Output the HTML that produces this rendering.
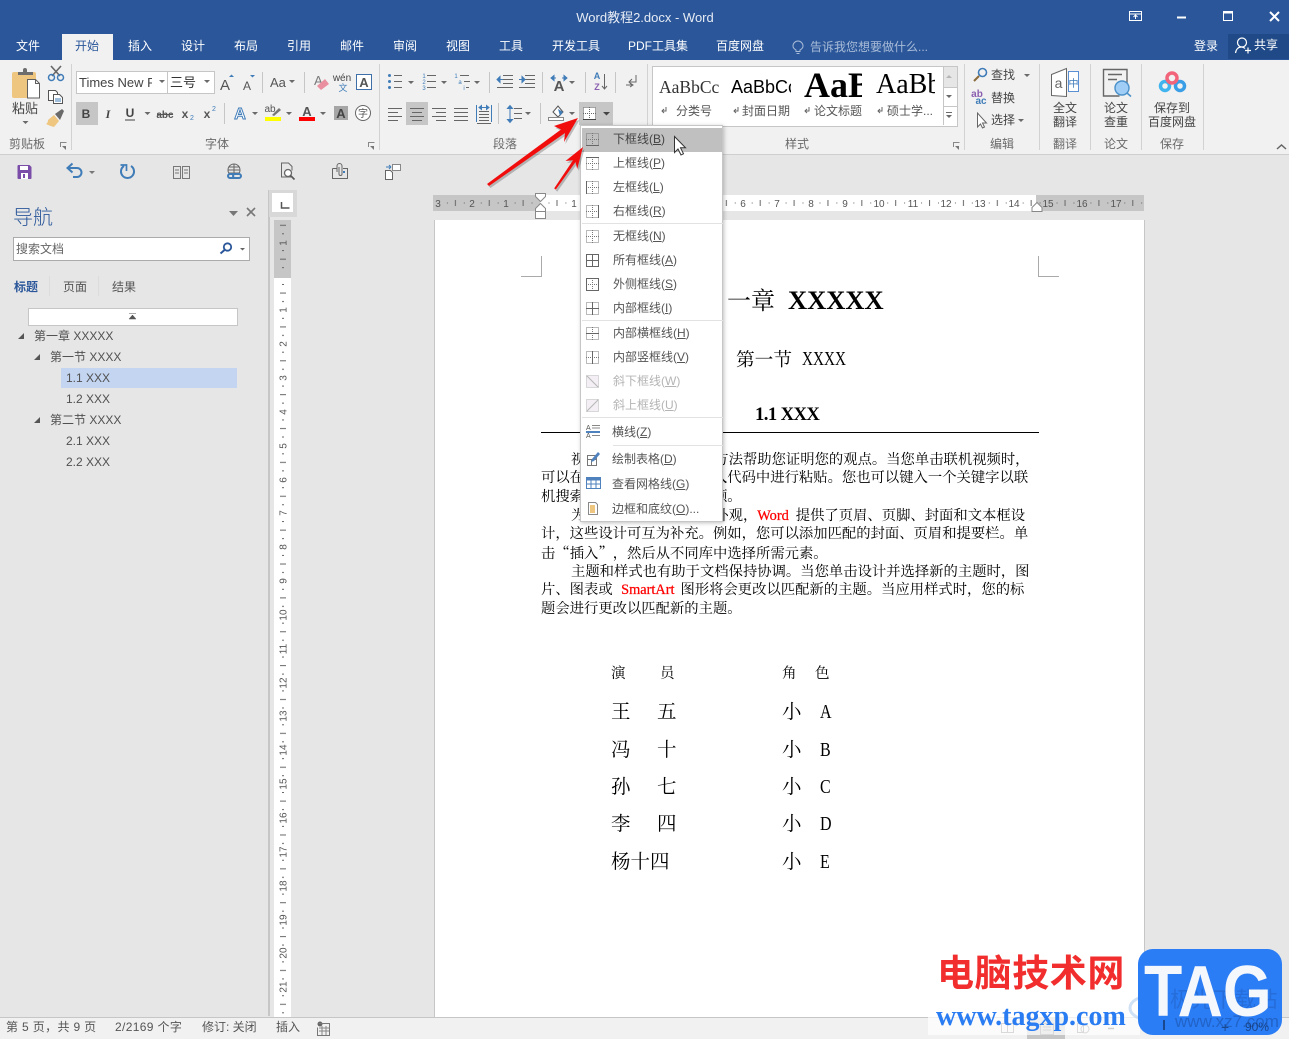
<!DOCTYPE html>
<html lang="zh-CN">
<head>
<meta charset="utf-8">
<title>Word教程2.docx - Word</title>
<style>
html,body{margin:0;padding:0}
body{position:relative;width:1289px;height:1039px;overflow:hidden;background:#e6e6e6;font-family:"Liberation Sans","Noto Sans CJK SC",sans-serif;font-size:12px;color:#444}
.b{position:absolute}
.t{position:absolute;white-space:nowrap;line-height:16px}
.c{transform:translateX(-50%)}
.w{color:#fff}
.g{color:#6a6a6a}
.d{position:absolute;white-space:nowrap;line-height:18px;font-size:14.33px;color:#000;font-family:"Liberation Serif","Noto Serif CJK SC",serif;text-spacing-trim:space-all}
.q{font-family:"Noto Serif CJK SC",serif}
.r{color:#f00;font-family:"Liberation Serif",serif;-webkit-text-stroke:.25px #f00}
.s{display:inline-block;transform:scaleX(.8);transform-origin:0 0}
.m{position:absolute;white-space:nowrap;line-height:16px;left:32px;color:#555}
.x{color:#b4b4b4}
.n{color:#505050;font-size:12px}
.st{letter-spacing:.35px;color:#555}
svg{position:absolute;left:0;top:0;overflow:visible}
svg text{font-family:"Liberation Sans","Noto Sans CJK SC",sans-serif}
.cl{position:absolute;overflow:hidden;white-space:nowrap}
</style>
</head>
<body>
<!-- backgrounds -->
<div class="b" style="left:0;top:0;width:1289px;height:60px;background:#2b579a"></div>
<div class="b" style="left:62px;top:34px;width:51px;height:26px;background:#f1f1f1"></div>
<div class="b" style="left:1228px;top:34px;width:61px;height:25px;background:#1f4a87"></div>
<div class="b" style="left:0;top:60px;width:1289px;height:94px;background:#f1f1f1;border-bottom:1px solid #cfcfcf"></div>
<div class="b" style="left:76px;top:71px;width:90px;height:21px;background:#fff;border:1px solid #c6c6c6"></div>
<div class="b" style="left:167px;top:71px;width:46px;height:21px;background:#fff;border:1px solid #c6c6c6"></div>
<div class="b" style="left:76px;top:102px;width:22px;height:23px;background:#c6c6c6"></div>
<div class="b" style="left:406px;top:102px;width:22px;height:23px;background:#c6c6c6"></div>
<div class="b" style="left:579px;top:102px;width:34px;height:23px;background:#c6c6c6"></div>
<div class="b" style="left:652px;top:66px;width:304px;height:59px;background:#fff;border:1px solid #c6c6c6"></div>
<div class="b" style="left:943px;top:67px;width:13px;height:20px;background:#e6e6e6;border-left:1px solid #c6c6c6;border-bottom:1px solid #c6c6c6"></div>
<div class="b" style="left:943px;top:87px;width:13px;height:19px;border-left:1px solid #c6c6c6;border-bottom:1px solid #c6c6c6"></div>
<div class="b" style="left:943px;top:106px;width:13px;height:19px;border-left:1px solid #c6c6c6"></div>
<!-- nav panel -->
<div class="b" style="left:268px;top:190px;width:2px;height:826px;background:#c6c6c6"></div>
<div class="b" style="left:13px;top:237px;width:235px;height:22px;background:#fff;border:1px solid #ababab"></div>
<div class="b" style="left:28px;top:308px;width:208px;height:16px;background:#fff;border:1px solid #c6c6c6"></div>
<div class="b" style="left:61px;top:368px;width:176px;height:20px;background:#c3d5f1"></div>
<div class="b" style="left:49px;top:276px;width:1px;height:20px;background:#dcdcdc"></div>
<div class="b" style="left:98px;top:276px;width:1px;height:20px;background:#dcdcdc"></div>
<!-- rulers bg -->
<div class="b" style="left:269px;top:190px;width:28px;height:27px;background:#d8d8d8"></div>
<div class="b" style="left:272px;top:193px;width:21px;height:19px;background:#fff"></div>
<div class="b" style="left:274px;top:220px;width:17px;height:797px;background:#fff"></div>
<div class="b" style="left:274px;top:220px;width:17px;height:58px;background:#c6c6c6"></div>
<div class="b" style="left:433px;top:195px;width:711px;height:16px;background:#fff"></div>
<div class="b" style="left:433px;top:195px;width:107px;height:16px;background:#c6c6c6"></div>
<div class="b" style="left:1036px;top:195px;width:108px;height:16px;background:#c6c6c6"></div>
<!-- document -->
<div class="b" style="left:434px;top:220px;width:709px;height:797px;background:#fff;border-left:1px solid #c6c6c6;border-right:1px solid #c6c6c6"></div>
<div class="b" style="left:541px;top:256px;width:1px;height:21px;background:#aaa"></div>
<div class="b" style="left:521px;top:276px;width:21px;height:1px;background:#aaa"></div>
<div class="b" style="left:1038px;top:256px;width:1px;height:21px;background:#aaa"></div>
<div class="b" style="left:1038px;top:276px;width:21px;height:1px;background:#aaa"></div>
<div class="b" style="left:541px;top:432px;width:498px;height:1px;background:#000"></div>
<!-- status bg -->
<div class="b" style="left:0;top:1017px;width:1289px;height:22px;background:#f1f1f1;border-top:1px solid #c6c6c6;box-sizing:border-box"></div>
<div class="b" style="left:1027px;top:1018px;width:38px;height:21px;background:#c6c6c6"></div>

<!-- icons layer -->
<svg width="1289" height="1039" viewBox="0 0 1289 1039">
<defs>
<pattern id="hr" x="540" y="195" width="33.87" height="16" patternUnits="userSpaceOnUse">
<path d="M8.5 7.5h1v1h-1zM25.4 7.5h1v1h-1zM16.5 5h1v6h-1z" fill="#666"/>
</pattern>
<pattern id="vr" x="274" y="276" width="17" height="33.87" patternUnits="userSpaceOnUse">
<path d="M8 8h2v1H8zM8 25h2v1H8zM6 16.5h6v1H6z" fill="#666"/>
</pattern>
</defs>
<!-- title buttons -->
<g fill="none" stroke="#fff">
<rect x="1129.5" y="11.5" width="12" height="9" stroke-width="1"/><path d="M1129 14h13M1135.5 19v-4M1133.5 17l2-2 2 2"/>
<path d="M1177 17.5h9" stroke-width="2"/>
<rect x="1223.5" y="11.5" width="9" height="9" stroke-width="1"/><path d="M1223 12.5h10" stroke-width="2"/>
<path d="M1270 12l9 9M1279 12l-9 9" stroke-width="2"/>
</g>
<!-- lightbulb -->
<path d="M796 51.5v-1.5c-1.8-1-3-2.500-3-4a5 5 0 0 1 10 0c0 1.500-1.200 3-3 4v1.500zM796.500 53.500h3" fill="none" stroke="#a9bcd8"/>
<!-- share icon -->
<g fill="none" stroke="#fff" stroke-width="1.200"><circle cx="1242" cy="42.500" r="4.500"/><path d="M1235.500 53c.5-4 3-6 6-6 1.500 0 2.500.5 3.500 1.500M1245 50.500h6M1248 47.500v6"/></g>
<!-- group separators -->
<path d="M71.500 64v86M379.500 64v86M647.500 64v86M964.500 64v86M1039.500 64v86M1090.500 64v86M1141.500 64v86M1203.500 64v86" stroke="#d2d2d2"/>
<path d="M262.500 72v21M304.500 72v21M224.500 103v21M489.500 72v21M542.500 72v21M585.500 72v21M615.500 72v21M498.500 103v21M540.500 103v21" stroke="#c6c6c6"/>
<!-- paste -->
<path d="M12 74q0-2 2-2h20q2 0 2 2v22q0 2-2 2H14q-2 0-2-2z" fill="#efc67f"/>
<path d="M18 72h5v-2q0-2 2-2t2 2v2h6v3H18z" fill="#6d6d6d"/>
<path d="M27.500 79.500h8l4 4v14.500h-12z" fill="#fff" stroke="#5f5f5f"/><path d="M35.500 79.500v4h4" fill="none" stroke="#5f5f5f"/>
<!-- scissors -->
<g fill="none"><path d="M51 66l9 10M61 66l-9 10" stroke="#666" stroke-width="1.600"/><circle cx="51.500" cy="77.500" r="3" stroke="#3f7cb8" stroke-width="1.500"/><circle cx="60.500" cy="77.500" r="3" stroke="#3f7cb8" stroke-width="1.500"/></g>
<!-- copy -->
<g fill="#fff" stroke="#555"><path d="M48.500 90.500h7l2 2v8h-9z"/><path d="M53.500 94.500h6l3 3v6h-9z"/></g><path d="M55 99h6M55 101h6" stroke="#3f7cb8"/>
<!-- brush -->
<path d="M48 120l6-5 5 6-5 6q-4-1-8-3 2-1 2-4z" fill="#efc67f"/><path d="M55 114l7-5 2 2-4 9z" fill="#6a6a6a"/>
<!-- arrows -->
<g fill="#6a6a6a">
<path d="M22.500 121h6l-3 3zM159 80h6l-3 3zM204 80h6l-3 3zM289 80h6l-3 3zM144.500 112h6l-3 3zM252 112h6l-3 3zM286 112h6l-3 3zM320 112h6l-3 3zM408 81h6l-3 3zM441 81h6l-3 3zM474 81h6l-3 3zM569 81h6l-3 3zM525 112h6l-3 3zM569 112h6l-3 3z"/>
<path d="M603 112h7l-3.500 3.500z" fill="#444"/>
<path d="M1024 74h6l-3 3zM1018 119h6l-3 3zM946 95h6l-3 3zM946 115h6l-3 3z"/><path d="M946 112h6v1h-6z"/>
<path d="M946 78h6l-3-3z" fill="#b5b5b5"/>
</g>
<path d="M1277 149l4.500-4 4.500 4" fill="none" stroke="#666" stroke-width="1.500"/>
<!-- launchers -->
<g fill="none" stroke="#888"><path d="M60.500 147v-4.500h6"/><path d="M368.500 147v-4.500h6"/><path d="M953.500 147v-4.500h6"/></g>
<path d="M62 146l4 4v-4zM370 146l4 4v-4zM955 146l4 4v-4z" fill="#777"/>
<!-- font row 1 icons -->
<text x="220" y="90" font-size="15" fill="#555">A</text><path d="M229 77l2.500-2.500 2.500 2.500z" fill="#3f7cb8"/>
<text x="243" y="90" font-size="12" fill="#555">A</text><path d="M250 75h5l-2.500 2.500z" fill="#3f7cb8"/>
<text x="270" y="87" font-size="13" fill="#555">Aa</text>
<text x="314" y="85" font-size="13" fill="#7a7a7a">A</text><polygon points="317,86 325,79 329,84 321,90" fill="#ea8f9f"/>
<text x="342" y="81" font-size="10" fill="#444" text-anchor="middle">wén</text><text x="343" y="91" font-size="9" fill="#3f7cb8" text-anchor="middle">文</text>
<rect x="356.500" y="74.500" width="15" height="15" fill="#fff" stroke="#3f6fa8"/><text x="364" y="87" font-size="13" font-weight="bold" fill="#555" text-anchor="middle">A</text>
<!-- font row 2 -->
<text x="86" y="118" font-size="12" font-weight="bold" fill="#444" text-anchor="middle">B</text>
<text x="108" y="118" font-size="12" font-style="italic" fill="#444" font-weight="bold" text-anchor="middle" style="font-family:'Liberation Serif',serif">I</text>
<text x="130" y="117" font-size="12" font-weight="bold" fill="#444" text-anchor="middle">U</text><path d="M125 120h10" stroke="#444"/>
<text x="165" y="118" font-size="10" font-weight="bold" fill="#555" text-anchor="middle">abc</text><path d="M157 114.500h16" stroke="#555"/>
<text x="185" y="118" font-size="12" font-weight="bold" fill="#555" text-anchor="middle">x</text><text x="192" y="120" font-size="7" fill="#3f7cb8" text-anchor="middle">2</text>
<text x="207" y="118" font-size="12" font-weight="bold" fill="#555" text-anchor="middle">x</text><text x="214" y="111" font-size="7" fill="#3f7cb8" text-anchor="middle">2</text>
<text x="240" y="119" font-size="16" font-weight="bold" fill="#fff" stroke="#3f7cb8" stroke-width="1" text-anchor="middle">A</text>
<text x="270" y="112" font-size="10" fill="#555" text-anchor="middle">ab</text><path d="M272 115l7-7 2 2-7 6z" fill="#777"/><rect x="265" y="117" width="16" height="4" fill="#ff0"/>
<text x="307" y="116" font-size="13" font-weight="bold" fill="#555" text-anchor="middle">A</text><rect x="299" y="117" width="16" height="4" fill="#f00"/>
<rect x="334" y="106" width="14" height="14" fill="#a6a6a6"/><text x="341" y="118" font-size="13" font-weight="bold" fill="#444" text-anchor="middle">A</text>
<circle cx="363" cy="113" r="7.500" fill="#fff" stroke="#666"/><text x="363" y="117" font-size="10" fill="#555" text-anchor="middle">字</text>
<!-- para row 1 -->
<g fill="#3f7cb8"><circle cx="389.500" cy="75.500" r="1.500"/><circle cx="389.500" cy="81.500" r="1.500"/><circle cx="389.500" cy="87.500" r="1.500"/></g>
<path d="M394 75.500h8M394 81.500h8M394 87.500h8M427 75.500h9M427 81.500h9M427 87.500h9M460 75.500h9M464 81.500h6M466 87.500h3" stroke="#666"/>
<text x="424" y="78" font-size="6" fill="#3f7cb8" text-anchor="middle">1</text><text x="424" y="84" font-size="6" fill="#3f7cb8" text-anchor="middle">2</text><text x="424" y="90" font-size="6" fill="#3f7cb8" text-anchor="middle">3</text>
<text x="456" y="78" font-size="6" fill="#3f7cb8" text-anchor="middle">1</text><text x="460" y="84" font-size="6" fill="#3f7cb8" text-anchor="middle">a</text><text x="464" y="90" font-size="6" fill="#3f7cb8" text-anchor="middle">i</text>
<!-- indent -->
<path d="M503 75.500h10M503 79.500h10M503 83.500h10M497 87.500h16M525 75.500h10M525 79.500h10M525 83.500h10M519 87.500h16" stroke="#666"/>
<path d="M497 79.500h6M497 79.500l3-3v6zM519 79.500h5M525 79.500l-3-3v6z" stroke="#3f7cb8" fill="#3f7cb8"/>
<!-- text direction -->
<text x="559" y="91" font-size="15" font-weight="bold" fill="#555" text-anchor="middle">A</text>
<path d="M551 78l3-2.500v5zM567 78l-3-2.500v5zM554 78h2M562 78h2" fill="#3f7cb8" stroke="#3f7cb8"/>
<!-- sort -->
<text x="597" y="79" font-size="9" font-weight="bold" fill="#3f7cb8" text-anchor="middle">A</text><text x="597" y="90" font-size="9" font-weight="bold" fill="#8a5fb0" text-anchor="middle">Z</text>
<path d="M604.500 74v15M602 86l2.500 3 2.500-3" fill="none" stroke="#666"/>
<!-- para mark -->
<path d="M636 75v7h-6M632 79l-3 3 3 3M626 85h6M630 83l3 2-3 2" fill="none" stroke="#666"/>
<!-- para row 2 -->
<path d="M388 108.500h14M388 112.500h10M388 116.500h14M388 120.500h10M410 108.500h14M412 112.500h10M410 116.500h14M412 120.500h10M432 108.500h14M436 112.500h10M432 116.500h14M436 120.500h10M454 108.500h14M454 112.500h14M454 116.500h14M454 120.500h14M479 111.500h10M479 114.500h10M479 117.500h10M479 120.500h10M477 123.500h14" stroke="#666"/>
<path d="M476.500 105v17M491.500 105v17M479 107.500h10M479 107.500l2.500-2v4zM489 107.500l-2.500-2v4z" stroke="#3f7cb8" fill="#3f7cb8"/>
<path d="M510 106v16M507.500 108.500l2.500-3 2.500 3zM507.500 119.500l2.500 3 2.500-3z" stroke="#3f7cb8" fill="#3f7cb8"/>
<path d="M514 108.500h8M514 113.500h8M514 118.500h8" stroke="#666"/>
<!-- shading -->
<path d="M553 112l5-6 5 6-5 5z" fill="#fff" stroke="#555"/><path d="M558 109l5 3-3 4z" fill="#3f7cb8"/><rect x="548.500" y="117.500" width="15" height="3" fill="#fff" stroke="#888"/>
<!-- borders button -->
<g transform="translate(583,107)"><rect x=".5" y=".5" width="12" height="12" fill="#fff" stroke="#666" stroke-dasharray="1 1"/><path d="M6.500 0v13M0 6.500h13" stroke="#666" stroke-dasharray="1 1"/><path d="M0 12.500h13" stroke="#444"/></g>
<!-- styles linebreak marks -->
<g fill="none" stroke="#666"><path d="M666 107v4h-4M664 109l-2 2 2 2M738 107v4h-4M736 109l-2 2 2 2M809 107v4h-4M807 109l-2 2 2 2M882 107v4h-4M880 109l-2 2 2 2"/></g>
<!-- editing -->
<circle cx="982.500" cy="72.500" r="4" fill="none" stroke="#3f7cb8" stroke-width="1.600"/><path d="M979 76l-5 5" stroke="#8a6a3a" stroke-width="2"/>
<text x="977" y="97" font-size="10" font-weight="bold" fill="#8a5fb0" text-anchor="middle">ab</text><text x="981" y="104" font-size="10" font-weight="bold" fill="#3f7cb8" text-anchor="middle">ac</text>
<path d="M977.500 113v14l3-3 2 4 2-1-2-4h4z" fill="#fff" stroke="#666"/>
<!-- translate -->
<path d="M1051.500 74.500l15-6v28l-15-1z" fill="#fff" stroke="#666"/><text x="1058.500" y="88" font-size="14" fill="#666" text-anchor="middle">a</text>
<rect x="1068.500" y="71.500" width="10" height="20" fill="#fff" stroke="#5b8fd3"/><text x="1073.500" y="87" font-size="10" fill="#3f7cb8" text-anchor="middle">中</text>
<!-- check -->
<path d="M1127 83V69.500h-23.500v26.500h16" fill="none" stroke="#666" stroke-width="1.400"/><path d="M1108 74.500h14M1108 79.500h9" stroke="#666" stroke-width="1.400"/>
<circle cx="1122" cy="88" r="7" fill="#9fcdf5" stroke="#4a90c9" stroke-width="1.400"/><path d="M1127 93l4 3.500" stroke="#4a90c9" stroke-width="1.500"/>
<!-- baidu -->
<g fill="none" stroke-width="3.500"><circle cx="1165" cy="86" r="4.500" stroke="#3fb4ee"/><circle cx="1180" cy="86" r="4.500" stroke="#3a9ee6"/><circle cx="1172" cy="78" r="5" stroke="#f2647a"/></g>
<!-- QAT -->
<path d="M17.500 166q0-1 1-1h11l2 2v11q0 1-1 1h-12q-1 0-1-1z" fill="#7b4da8"/><rect x="20" y="166" width="8" height="4" fill="#fff"/><rect x="21" y="173" width="7" height="6" fill="#fff"/><rect x="23" y="174" width="2" height="4" fill="#7b4da8"/>
<path d="M69 168h8a4 4 0 0 1 0 9h-4" fill="none" stroke="#3f7cb8" stroke-width="2"/><path d="M72.500 163.500l-5 4.500 5 4.500" fill="none" stroke="#3f7cb8" stroke-width="2"/>
<path d="M89 171h6l-3 3z" fill="#777"/>
<path d="M124 166a6.500 6.500 0 1 0 7 0" fill="none" stroke="#3f7cb8" stroke-width="2"/><path d="M120.500 165h6v6" fill="none" stroke="#3f7cb8" stroke-width="1.700"/>
<g fill="none" stroke="#777"><rect x="173.500" y="166.500" width="7" height="12"/><rect x="182.500" y="166.500" width="7" height="12"/><path d="M175 170h4M175 173h4M184 170h4M184 173h4"/></g>
<circle cx="234" cy="170" r="6" fill="none" stroke="#666"/><path d="M228 170h12M234 164v12M229 167h10M229 173h10" stroke="#666" fill="none"/>
<g fill="#e6e6e6" stroke="#3f7cb8" stroke-width="2"><rect x="228" y="174" width="8" height="4" rx="2"/><rect x="233" y="174" width="8" height="4" rx="2"/></g>
<path d="M291 177h-9.500v-14h7l3.500 3.500v4" fill="none" stroke="#666"/><circle cx="288" cy="173" r="3.500" fill="#fff" stroke="#666" stroke-width="1.300"/><path d="M290.500 175.500l4 4" stroke="#555" stroke-width="1.600"/>
<path d="M332.500 168.500h4M343 168.500h4.500v10h-15v-10" fill="none" stroke="#666"/><path d="M337 172v-6a2.500 2.500 0 0 1 5 0v8a1.500 1.500 0 0 1-3 0v-7" fill="none" stroke="#666"/><rect x="343" y="171" width="2" height="2" fill="#3f7cb8"/>
<path d="M385.500 170.500h5l2 2v7h-7z" fill="#fff" stroke="#666"/><rect x="392.500" y="164.500" width="8" height="6" fill="#fff" stroke="#888"/><path d="M386 167h5M391 167l-2-2M391 167l-2 2" stroke="#3f7cb8" fill="none"/>
<!-- nav icons -->
<path d="M229 211h9l-4.500 5z" fill="#777"/>
<path d="M247 208l8 8M255 208l-8 8" stroke="#777" stroke-width="1.600"/>
<circle cx="227.500" cy="247" r="3.700" fill="#fff" stroke="#2b579a" stroke-width="1.800"/><path d="M224.500 250l-4 3.500" stroke="#2b579a" stroke-width="2"/>
<path d="M240 248h5l-2.500 2.500z" fill="#666"/>
<path d="M129 313.500h7M129 319l3.500-4 3.500 4z" fill="#555" stroke="#555" stroke-width=".5"/>
<path d="M18 339l6-6v6zM34 360l6-6v6zM34 423l6-6v6z" fill="#555"/>
<!-- ruler corner -->
<path d="M281.500 202v6h8" fill="none" stroke="#555" stroke-width="1.500"/>
<!-- rulers -->
<rect x="433" y="195" width="711" height="16" fill="url(#hr)"/>
<rect x="274" y="220" width="17" height="797" fill="url(#vr)"/>
<g font-size="10" fill="#555" text-anchor="middle">
<text x="438" y="207">3</text><text x="472" y="207">2</text><text x="506" y="207">1</text><text x="574" y="207">1</text><text x="743" y="207">6</text><text x="777" y="207">7</text><text x="811" y="207">8</text><text x="845" y="207">9</text><text x="879" y="207">10</text><text x="913" y="207">11</text><text x="946" y="207">12</text><text x="980" y="207">13</text><text x="1014" y="207">14</text><text x="1048" y="207">15</text><text x="1082" y="207">16</text><text x="1116" y="207">17</text>
</g>
<g font-size="10" fill="#555" text-anchor="middle">
<text transform="translate(286.500,243) rotate(-90)">1</text>
<text transform="translate(286.500,310) rotate(-90)">1</text><text transform="translate(286.500,344) rotate(-90)">2</text><text transform="translate(286.500,378) rotate(-90)">3</text><text transform="translate(286.500,412) rotate(-90)">4</text><text transform="translate(286.500,446) rotate(-90)">5</text><text transform="translate(286.500,480) rotate(-90)">6</text><text transform="translate(286.500,513) rotate(-90)">7</text><text transform="translate(286.500,547) rotate(-90)">8</text><text transform="translate(286.500,581) rotate(-90)">9</text><text transform="translate(286.500,615) rotate(-90)">10</text><text transform="translate(286.500,649) rotate(-90)">11</text><text transform="translate(286.500,683) rotate(-90)">12</text><text transform="translate(286.500,716) rotate(-90)">13</text><text transform="translate(286.500,750) rotate(-90)">14</text><text transform="translate(286.500,784) rotate(-90)">15</text><text transform="translate(286.500,818) rotate(-90)">16</text><text transform="translate(286.500,852) rotate(-90)">17</text><text transform="translate(286.500,886) rotate(-90)">18</text><text transform="translate(286.500,920) rotate(-90)">19</text><text transform="translate(286.500,953) rotate(-90)">20</text><text transform="translate(286.500,987) rotate(-90)">21</text>
</g>
<!-- indent markers -->
<path d="M535.500 193.500h10v3l-5 5-5-5zM535.500 211.500v-3l5-5 5 5v3z" fill="#fff" stroke="#888"/><rect x="535.500" y="211.500" width="10" height="7" fill="#fff" stroke="#888"/>
<path d="M1032 211.500v-4l5-5 5 5v4z" fill="#fff" stroke="#888"/>
<!-- status icons -->
<circle cx="320" cy="1024" r="2.500" fill="#666"/><path d="M318.500 1023.500h11v12h-12v-8" fill="none" stroke="#777"/><path d="M319 1028h10M319 1031h10M322 1026v9M326 1026v9" stroke="#888" fill="none"/>
<g fill="none" stroke="#777"><path d="M1001.500 1023.500h6v9h-6zM1007.500 1023.500h6v9h-6z"/><path d="M1040.500 1023.500h13v11h-13zM1043 1027h8M1043 1030h8"/><circle cx="1085" cy="1029" r="4"/><path d="M1077.500 1023.500h6v9h-6z"/></g>
<path d="M1108 1028.500h6" stroke="#555" stroke-width="1.500"/>
</svg>

<!-- title & tabs -->
<div class="t c" style="left:645px;top:10px;color:#e6ebf4;font-size:13px">Word教程2.docx - Word</div>
<div class="t c w" style="left:28px;top:38px">文件</div>
<div class="t c" style="left:87px;top:38px;color:#2b579a">开始</div>
<div class="t c w" style="left:140px;top:38px">插入</div>
<div class="t c w" style="left:193px;top:38px">设计</div>
<div class="t c w" style="left:246px;top:38px">布局</div>
<div class="t c w" style="left:299px;top:38px">引用</div>
<div class="t c w" style="left:352px;top:38px">邮件</div>
<div class="t c w" style="left:405px;top:38px">审阅</div>
<div class="t c w" style="left:458px;top:38px">视图</div>
<div class="t c w" style="left:511px;top:38px">工具</div>
<div class="t c w" style="left:576px;top:38px">开发工具</div>
<div class="t c w" style="left:658px;top:38px">PDF工具集</div>
<div class="t c w" style="left:740px;top:38px">百度网盘</div>
<div class="t" style="left:810px;top:39px;color:#a9bcd8">告诉我您想要做什么...</div>
<div class="t c w" style="left:1206px;top:38px">登录</div>
<div class="t w" style="left:1254px;top:37px">共享</div>

<!-- ribbon text -->
<div class="t c" style="left:25px;top:101px;font-size:13px;color:#444">粘贴</div>
<div class="t" style="left:79px;top:75px;font-size:13px;width:73px;overflow:hidden;color:#444">Times New Roman</div>
<div class="t" style="left:170px;top:75px;font-size:13px;color:#333">三号</div>
<div class="t c g" style="left:27px;top:136px;font-size:12px">剪贴板</div>
<div class="t c g" style="left:217px;top:136px">字体</div>
<div class="t c g" style="left:505px;top:136px">段落</div>
<div class="t c g" style="left:797px;top:136px">样式</div>
<div class="t c g" style="left:1002px;top:136px">编辑</div>
<div class="t c g" style="left:1065px;top:136px">翻译</div>
<div class="t c g" style="left:1116px;top:136px">论文</div>
<div class="t c g" style="left:1172px;top:136px">保存</div>
<div class="cl" style="left:659px;top:74px;width:60px;height:26px;font:17.5px/26px 'Liberation Serif',serif;color:#333">AaBbCc</div>
<div class="cl" style="left:731px;top:74px;width:60px;height:26px;font:18px/26px 'Liberation Sans',sans-serif;color:#000">AaBbCc</div>
<div class="cl" style="left:804px;top:66px;width:58px;height:36px;font:bold 36px/38px 'Liberation Serif',serif;color:#000">AaBb</div>
<div class="cl" style="left:876px;top:69px;width:59px;height:32px;font:28px/32px 'Liberation Serif',serif;color:#000">AaBb</div>
<div class="t" style="left:676px;top:103px;color:#555">分类号</div>
<div class="t" style="left:742px;top:103px;color:#555">封面日期</div>
<div class="t" style="left:814px;top:103px;color:#555">论文标题</div>
<div class="t" style="left:887px;top:103px;color:#555">硕士学...</div>
<div class="t" style="left:991px;top:67px;color:#444">查找</div>
<div class="t" style="left:991px;top:90px;color:#444">替换</div>
<div class="t" style="left:991px;top:112px;color:#444">选择</div>
<div class="t c" style="left:1065px;top:100px">全文</div>
<div class="t c" style="left:1065px;top:114px">翻译</div>
<div class="t c" style="left:1116px;top:100px">论文</div>
<div class="t c" style="left:1116px;top:114px">查重</div>
<div class="t c" style="left:1172px;top:100px">保存到</div>
<div class="t c" style="left:1172px;top:114px">百度网盘</div>

<!-- nav text -->
<div class="t" style="left:13px;top:205px;font-size:20px;line-height:26px;color:#2b579a;font-weight:300">导航</div>
<div class="t" style="left:16px;top:241px;color:#666">搜索文档</div>
<div class="t" style="left:14px;top:279px;color:#2b579a;font-weight:bold">标题</div>
<div class="t" style="left:63px;top:279px;color:#555">页面</div>
<div class="t" style="left:112px;top:279px;color:#555">结果</div>
<div class="t n" style="left:34px;top:328px">第一章 XXXXX</div>
<div class="t n" style="left:50px;top:349px">第一节 XXXX</div>
<div class="t n" style="left:66px;top:370px">1.1 XXX</div>
<div class="t n" style="left:66px;top:391px">1.2 XXX</div>
<div class="t n" style="left:50px;top:412px">第二节 XXXX</div>
<div class="t n" style="left:66px;top:433px">2.1 XXX</div>
<div class="t n" style="left:66px;top:454px">2.2 XXX</div>

<!-- document text -->
<div class="t" style="left:703px;top:286px;line-height:32px;font-size:24px;color:#000;font-family:'Liberation Serif','Noto Serif CJK SC',serif;clip-path:inset(0 0 0 24.5px)">第一章</div>
<div class="t" style="left:788px;top:284px;line-height:32px;font-size:26.5px;font-weight:bold;color:#000;font-family:'Liberation Serif',serif">XXXXX</div>
<div class="t" style="left:736px;top:349px;line-height:24px;font-size:18.7px;color:#000;font-family:'Liberation Serif','Noto Serif CJK SC',serif">第一节</div>
<div class="t" style="left:802px;top:348px;line-height:24px;font-size:19.5px;color:#000;font-family:'Liberation Serif',serif;transform:scaleX(.78);transform-origin:0 0">XXXX</div>
<div class="t" style="left:755px;top:403px;line-height:24px;font-size:18.7px;font-weight:bold;letter-spacing:-.6px;color:#000;font-family:'Liberation Serif',serif">1.1 XXX</div>

<div class="d" style="left:571px;top:451px">视频提供了功能强大的方法帮助您证明您的观点。当您单击联机视频时，</div>
<div class="d" style="left:541px;top:469px">可以在想要添加的视频的嵌入代码中进行粘贴。您也可以键入一个关键字以联</div>
<div class="d" style="left:541px;top:488px">机搜索最适合您的文档的视频。</div>
<div class="d" style="left:571px;top:507px">为使您的文档具有专业外观，<span class="r" style="margin-right:7px">Word</span>提供了页眉、页脚、封面和文本框设</div>
<div class="d" style="left:541px;top:525px">计，这些设计可互为补充。例如，您可以添加匹配的封面、页眉和提要栏。单</div>
<div class="d" style="left:541px;top:544px">击<span class="q">“</span>插入<span class="q">”</span>，然后从不同库中选择所需元素。</div>
<div class="d" style="left:571px;top:563px">主题和样式也有助于文档保持协调。当您单击设计并选择新的主题时，图</div>
<div class="d" style="left:541px;top:581px">片、图表或<span class="r" style="margin:0 6px 0 8.5px">SmartArt</span>图形将会更改以匹配新的主题。当应用样式时，您的标</div>
<div class="d" style="left:541px;top:600px">题会进行更改以匹配新的主题。</div>

<div class="d" style="left:611px;top:665px;font-size:14.5px">演</div><div class="d" style="left:660px;top:665px;font-size:14.5px">员</div>
<div class="d" style="left:782px;top:665px;font-size:14.5px">角</div><div class="d" style="left:815px;top:665px;font-size:14.5px">色</div>
<div class="d" style="left:611px;top:704px;font-size:19.5px">王</div><div class="d" style="left:657px;top:704px;font-size:19.5px">五</div><div class="d" style="left:782px;top:704px;font-size:19.5px">小</div><div class="d" style="left:820px;top:703px;font-size:20px"><span class="s">A</span></div>
<div class="d" style="left:611px;top:742px;font-size:19.5px">冯</div><div class="d" style="left:657px;top:742px;font-size:19.5px">十</div><div class="d" style="left:782px;top:742px;font-size:19.5px">小</div><div class="d" style="left:820px;top:741px;font-size:20px"><span class="s">B</span></div>
<div class="d" style="left:611px;top:779px;font-size:19.5px">孙</div><div class="d" style="left:657px;top:779px;font-size:19.5px">七</div><div class="d" style="left:782px;top:779px;font-size:19.5px">小</div><div class="d" style="left:820px;top:778px;font-size:20px"><span class="s">C</span></div>
<div class="d" style="left:611px;top:816px;font-size:19.5px">李</div><div class="d" style="left:657px;top:816px;font-size:19.5px">四</div><div class="d" style="left:782px;top:816px;font-size:19.5px">小</div><div class="d" style="left:820px;top:815px;font-size:20px"><span class="s">D</span></div>
<div class="d" style="left:611px;top:854px;font-size:19.5px">杨十四</div><div class="d" style="left:782px;top:854px;font-size:19.5px">小</div><div class="d" style="left:820px;top:853px;font-size:20px"><span class="s">E</span></div>

<!-- status text -->
<div class="t st" style="left:6px;top:1019px">第 5 页，共 9 页</div>
<div class="t st" style="left:115px;top:1019px">2/2169 个字</div>
<div class="t" style="left:202px;top:1019px;color:#555">修订: 关闭</div>
<div class="t" style="left:276px;top:1019px;color:#555">插入</div>

<!-- dropdown menu -->
<div class="b" style="left:580px;top:125px;width:143px;height:397px;background:#fff;border:1px solid #c6c6c6;box-sizing:border-box;box-shadow:1px 1px 4px rgba(0,0,0,.25)">
<div class="b" style="left:1px;top:2px;width:140px;height:24px;background:#c0c0c0"></div>
<div class="b" style="left:1px;top:97px;width:141px;height:1px;background:#e2e2e2"></div>
<div class="b" style="left:1px;top:194px;width:141px;height:1px;background:#e2e2e2"></div>
<div class="b" style="left:1px;top:291px;width:141px;height:1px;background:#e2e2e2"></div>
<div class="b" style="left:32px;top:319px;width:110px;height:1px;background:#e2e2e2"></div>
<div class="m" style="top:5px;color:#444">下框线(<u>B</u>)</div>
<div class="m" style="top:29px">上框线(<u>P</u>)</div>
<div class="m" style="top:53px">左框线(<u>L</u>)</div>
<div class="m" style="top:77px">右框线(<u>R</u>)</div>
<div class="m" style="top:102px">无框线(<u>N</u>)</div>
<div class="m" style="top:126px">所有框线(<u>A</u>)</div>
<div class="m" style="top:150px">外侧框线(<u>S</u>)</div>
<div class="m" style="top:174px">内部框线(<u>I</u>)</div>
<div class="m" style="top:199px">内部横框线(<u>H</u>)</div>
<div class="m" style="top:223px">内部竖框线(<u>V</u>)</div>
<div class="m x" style="top:247px">斜下框线(<u>W</u>)</div>
<div class="m x" style="top:271px">斜上框线(<u>U</u>)</div>
<div class="m" style="top:298px;left:31px">横线(<u>Z</u>)</div>
<div class="m" style="top:325px;left:31px">绘制表格(<u>D</u>)</div>
<div class="m" style="top:350px;left:31px">查看网格线(<u>G</u>)</div>
<div class="m" style="top:375px;left:31px">边框和底纹(<u>O</u>)...</div>
</div>

<svg width="1289" height="1039" viewBox="0 0 1289 1039">
<defs>
<g id="bg" fill="none" stroke="#777" stroke-dasharray="1 1"><rect x=".5" y=".5" width="12" height="12"/><path d="M6.500 0v13M0 6.500h13"/></g>
</defs>
<g fill="none" stroke="#666">
<g transform="translate(586,133)"><use href="#bg"/><path d="M0 12.500h13"/></g>
<g transform="translate(586,157)"><use href="#bg"/><path d="M0 .5h13"/></g>
<g transform="translate(586,181)"><use href="#bg"/><path d="M.5 0v13"/></g>
<g transform="translate(586,205)"><use href="#bg"/><path d="M12.500 0v13"/></g>
<g transform="translate(586,230)"><use href="#bg"/></g>
<g transform="translate(586,254)"><rect x=".5" y=".5" width="12" height="12"/><path d="M6.500 0v13M0 6.500h13"/></g>
<g transform="translate(586,278)"><use href="#bg"/><rect x=".5" y=".5" width="12" height="12"/></g>
<g transform="translate(586,302)"><use href="#bg"/><path d="M6.500 0v13M0 6.500h13"/></g>
<g transform="translate(586,327)"><use href="#bg"/><path d="M0 6.500h13"/></g>
<g transform="translate(586,351)"><use href="#bg"/><path d="M6.500 0v13"/></g>
</g>
<g fill="#f3eff5" stroke="#b5b5b5">
<g transform="translate(586,375)"><rect x=".5" y=".5" width="12" height="12" stroke-dasharray="1 1"/><path d="M.5 .5l12 12"/></g>
<g transform="translate(586,399)"><rect x=".5" y=".5" width="12" height="12" stroke-dasharray="1 1"/><path d="M.5 12.500l12-12"/></g>
</g>
<text x="586" y="430" font-size="7" fill="#555">A</text><text x="586" y="438" font-size="7" fill="#555">A</text>
<path d="M592 425.500h8M592 428h8M592 435.500h8" stroke="#888"/><rect x="586" y="431" width="14" height="2" fill="#4f81bd"/>
<path d="M587.500 455.500h9v10h-9zM587.500 459.500h9M591.500 459.500v6" fill="none" stroke="#777"/><path d="M592 459l6-7 2 2-6 7-3 1z" fill="#4f81bd"/>
<path d="M586.500 477.500h14v11h-14z" fill="#fff" stroke="#4f81bd"/><path d="M586.500 477.500h14v3h-14z" fill="#4f81bd"/><path d="M586 484h15M591 478v11M596 478v11" stroke="#4f81bd" fill="none"/>
<path d="M588.500 502.500h7l2 2v10h-9z" fill="#fff" stroke="#888"/><rect x="590" y="505" width="5" height="8" fill="#efc67f"/>
<!-- cursor -->
<path d="M674.500 136.500v16l3.500-3.500 3 6 2.500-1.200-3-6h5z" fill="#fff" stroke="#333"/>
<!-- red arrows -->
<g fill="#000" opacity=".22" transform="translate(1.500,2)">
<polygon points="578,118 554,126 561,129.500 487,184 489,186 565,133 564,142"/>
<polygon points="583,147 565.500,161 573,160.200 554.200,188.400 555.800,189.600 575.500,162 577.200,169"/>
</g>
<g fill="#f20d0d">
<polygon points="578,118 554,126 561,129.500 487,184 489,186 565,133 564,142"/>
<polygon points="583,147 565.500,161 573,160.200 554.200,188.400 555.800,189.600 575.500,162 577.200,169"/>
</g>
</svg>

<!-- watermark -->
<div class="b" style="left:928px;top:1017px;width:212px;height:18px;background:rgba(255,255,255,.72)"></div>
<div class="t" style="left:937px;top:952px;line-height:44px;font-size:37px;font-weight:bold;letter-spacing:.6px;color:#f12d2d;font-family:'Liberation Sans','Noto Sans CJK SC',sans-serif">电脑技术网</div>
<div class="t" style="left:936px;top:1000px;line-height:34px;font-size:28px;font-weight:bold;color:#2a7cf2;font-family:'Liberation Serif',serif">www.tagxp.com</div>
<svg width="1289" height="1039" viewBox="0 0 1289 1039"><ellipse cx="1150" cy="1008" rx="20" ry="12" fill="none" stroke="#bcd4f2" stroke-width="3" opacity=".7"/></svg>
<div class="b" style="left:1138px;top:949px;width:144px;height:86px;border-radius:15px;background:#2b7df5;overflow:hidden">
<div class="t" style="left:32px;top:37px;font-size:21.5px;line-height:28px;color:rgba(30,80,170,.35);font-family:'Liberation Sans','Noto Sans CJK SC',sans-serif">极光下载站</div>
<div class="t" style="left:37px;top:65px;font-size:17px;color:rgba(20,60,130,.4)">www.xz7.com</div>
<div class="b" style="left:25px;top:71px;width:2px;height:10px;background:rgba(20,50,100,.7)"></div>
<div class="t" style="left:83px;top:70px;font-size:14px;color:rgba(20,50,100,.7)">+</div>
<div class="t" style="left:107px;top:70px;color:rgba(20,50,100,.75);line-height:16px">90%</div>
<div class="t" style="left:6px;top:5px;font-size:72px;line-height:76px;font-weight:bold;color:#f4f7fc;transform:scaleX(.87);transform-origin:0 0">TAG</div>
</div>
</body>
</html>
